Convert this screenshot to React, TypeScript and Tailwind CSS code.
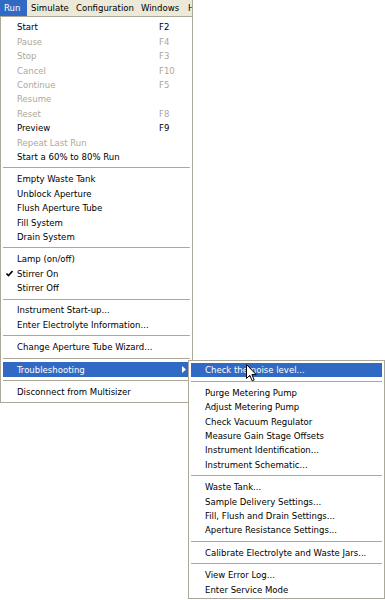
import { ReactNode } from "react";

type Entry =
  | { kind: "sep" }
  | {
      kind: "item";
      label: string;
      key?: string;
      disabled?: boolean;
      checked?: boolean;
      active?: boolean;
      submenu?: boolean;
    };

const sep: Entry = { kind: "sep" };
const it = (label: string, opts: Partial<Extract<Entry, { kind: "item" }>> = {}): Entry => ({
  kind: "item",
  label,
  ...opts,
});

const runMenu: Entry[] = [
  it("Start", { key: "F2" }),
  it("Pause", { key: "F4", disabled: true }),
  it("Stop", { key: "F3", disabled: true }),
  it("Cancel", { key: "F10", disabled: true }),
  it("Continue", { key: "F5", disabled: true }),
  it("Resume", { disabled: true }),
  it("Reset", { key: "F8", disabled: true }),
  it("Preview", { key: "F9" }),
  it("Repeat Last Run", { disabled: true }),
  it("Start a 60% to 80% Run"),
  sep,
  it("Empty Waste Tank"),
  it("Unblock Aperture"),
  it("Flush Aperture Tube"),
  it("Fill System"),
  it("Drain System"),
  sep,
  it("Lamp (on/off)"),
  it("Stirrer On", { checked: true }),
  it("Stirrer Off"),
  sep,
  it("Instrument Start-up..."),
  it("Enter Electrolyte Information..."),
  sep,
  it("Change Aperture Tube Wizard..."),
  sep,
  it("Troubleshooting", { active: true, submenu: true }),
  sep,
  it("Disconnect from Multisizer"),
];

const troubleMenu: Entry[] = [
  it("Check the noise level...", { active: true }),
  sep,
  it("Purge Metering Pump"),
  it("Adjust Metering Pump"),
  it("Check Vacuum Regulator"),
  it("Measure Gain Stage Offsets"),
  it("Instrument Identification..."),
  it("Instrument Schematic..."),
  sep,
  it("Waste Tank..."),
  it("Sample Delivery Settings..."),
  it("Fill, Flush and Drain Settings..."),
  it("Aperture Resistance Settings..."),
  sep,
  it("Calibrate Electrolyte and Waste Jars..."),
  sep,
  it("View Error Log..."),
  it("Enter Service Mode"),
];

function Check() {
  return (
    <svg width="7" height="7" viewBox="0 0 7 7" className="ml-[3px]">
      <path d="M0.5 3.5 L2.5 5.5 L6.5 1" fill="none" stroke="#000" strokeWidth="1.6" />
    </svg>
  );
}

function MenuList({ entries }: { entries: Entry[] }) {
  return (
    <>
      {entries.map((e, i) => {
        if (e.kind === "sep") {
          return (
            <div key={i} className="flex h-[8px] items-center">
              <div className="h-px w-full bg-[#aca899]" />
            </div>
          );
        }
        const color = e.active ? "bg-[#316ac5] text-white" : e.disabled ? "text-[#aca899]" : "text-black";
        let right: ReactNode = null;
        if (e.key) right = <span>{e.key}</span>;
        if (e.submenu)
          right = (
            <div className="flex w-full justify-end pr-[4px]">
              <svg width="4" height="7" viewBox="0 0 4 7">
                <path d="M0 0 L4 3.5 L0 7 Z" fill="#fff" />
              </svg>
            </div>
          );
        return (
          <div key={i} className={`flex h-[14.4px] items-center ${color}`}>
            <div className="flex w-[14px] shrink-0 items-center">{e.checked && <Check />}</div>
            <span className="flex-1 whitespace-nowrap">{e.label}</span>
            <div className="flex w-[31px] shrink-0">{right}</div>
          </div>
        );
      })}
    </>
  );
}

export default function App() {
  return (
    <div
      className="relative h-[600px] w-[385px] overflow-hidden bg-white text-[9.5px] leading-none"
      style={{ fontFamily: '"DejaVu Sans Condensed", "Liberation Sans", sans-serif', fontStretch: "condensed" }}
    >
      <div className="w-[193px]">
        <div className="flex h-[16px] items-center overflow-hidden border-r border-[#aca899] bg-[#ece9d8] text-black">
          <div className="flex h-full w-[27px] shrink-0 items-center bg-[#316ac5] pl-[4px] text-white">Run</div>
          <div className="w-[45px] shrink-0 pl-[4px]">Simulate</div>
          <div className="w-[65px] shrink-0 pl-[4px]">Configuration</div>
          <div className="w-[47px] shrink-0 pl-[4px]">Windows</div>
          <div className="shrink-0 pl-[4px]">H</div>
        </div>
        <div className="border border-[#aca899] bg-white px-[2px] pb-[3px] pt-[3px]">
          <MenuList entries={runMenu} />
        </div>
      </div>

      <div className="absolute left-[188px] top-[360px] w-[197px] border border-[#aca899] bg-white px-[2px] pb-[2px] pt-[2px]">
        <MenuList entries={troubleMenu} />
      </div>

      <svg className="absolute left-[246px] top-[364px]" width="11" height="18" viewBox="0 0 11 18">
        <path d="M0.5 0.5 L0.5 14.5 L3.8 11.3 L6.2 16.8 L8.2 15.9 L5.9 10.6 L10.2 10.6 Z" fill="#fff" stroke="#000" strokeWidth="1" strokeLinejoin="round" />
      </svg>
    </div>
  );
}
